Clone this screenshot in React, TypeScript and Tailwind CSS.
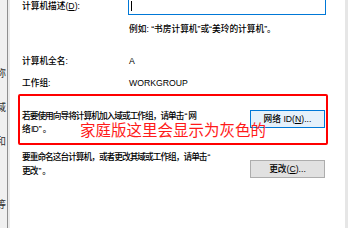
const FONT = "font-['Liberation_Sans','Noto_Sans_CJK_SC',sans-serif]";

function Btn({ label, hot, active }: { label: string; hot: string; active?: boolean }) {
  return (
    <div
      className={
        "flex h-[18px] w-[75px] items-center justify-center border text-[8.7px] leading-[12px] text-black " +
        (active ? "border-[#0078d7] bg-[#e5f1fb]" : "border-[#adadad] bg-[#e1e1e1]")
      }
    >
      {label}(<span className="underline">{hot}</span>)...
    </div>
  );
}

function Q({ c }: { c: string }) {
  return <span className="px-[1px] tracking-normal">{c}</span>;
}

export default function App() {
  return (
    <div className={`flex h-[228px] w-[350px] overflow-hidden bg-white ${FONT}`}>
      {/* window behind, cut off on the left */}
      <div className="flex w-[10px] shrink-0">
        <div className="relative w-[7px] overflow-hidden bg-[#f0f0f0] text-[10px] leading-[12px] text-[#333]">
          <span className="absolute left-[-4px] top-[68px]">称</span>
          <span className="absolute left-[-4px] top-[102px]">域</span>
          <span className="absolute left-[-4px] top-[136px]">和</span>
          <span className="absolute left-[-4px] top-[199px]">等</span>
        </div>
        <div className="w-px bg-[#8f8f8f]" />
        <div className="w-[2px] bg-[#ececec]" />
      </div>

      <div className="flex w-[335px] shrink-0 flex-col pl-[12px] text-[8.7px] font-medium leading-[13px] text-black">
        <div className="flex items-start">
          <div className="w-[106px]">
            计算机描述(<span className="underline">D</span>):
          </div>
          <div className="-mt-[9px] flex h-[24px] w-[198px] items-end border border-[#0078d7] pb-[3px] pl-[2px]">
            <div className="h-[10px] w-px bg-black" />
          </div>
        </div>
        <div className="ml-[107px] mt-[8px]">例如: “书房计算机”或“美玲的计算机”。</div>

        <div className="mt-[19px] flex">
          <div className="w-[107px]">计算机全名:</div>
          <div>A</div>
        </div>
        <div className="mt-[9px] flex">
          <div className="w-[107px]">工作组:</div>
          <div>WORKGROUP</div>
        </div>

        <div className="relative ml-[-4px] mt-[4px] h-[51px] w-[310px] rounded-[2px] border-2 border-[#ff0000] pl-[2px]">
          <div className="flex items-start justify-between pr-[1px] pt-[14px]">
            <div className="tracking-[-1px]">
              若要使用向导将计算机加入域或工作组，请单击<Q c="“" />网
              <br />
              络 ID<Q c="”" />。
            </div>
            <Btn label="网络 ID" hot="N" active />
          </div>
          <div className="absolute left-[60px] top-[26px] text-[15.5px] font-normal leading-[18px] text-[#ff1a1a]">
            家庭版这里会显示为灰色的
          </div>
        </div>

        <div className="mt-[5px] flex w-[303px] items-start justify-between">
          <div className="leading-[14px] tracking-[-1px]">
            要重命名这台计算机，或者更改其域或工作组，请单击<Q c="“" />
            <br />
            更改<Q c="”" />。
          </div>
          <div className="mt-[10px]">
            <Btn label="更改" hot="C" />
          </div>
        </div>
      </div>

      <div className="w-[3px] shrink-0 bg-[#e6e6e6]" />
      <div className="flex-1 bg-white" />
    </div>
  );
}
